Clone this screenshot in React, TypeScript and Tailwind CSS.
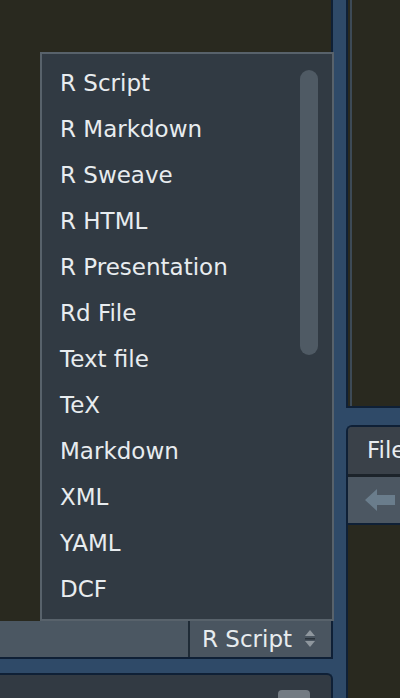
const fileTypes = [
  "R Script",
  "R Markdown",
  "R Sweave",
  "R HTML",
  "R Presentation",
  "Rd File",
  "Text file",
  "TeX",
  "Markdown",
  "XML",
  "YAML",
  "DCF",
];

const font = { fontFamily: '"DejaVu Sans", "Liberation Sans", sans-serif' };

function UpDown() {
  return (
    <svg width="12" height="20" viewBox="0 0 12 20" className="ml-auto">
      <path d="M6 1 L11 7 L1 7 Z" fill="#8f979e" />
      <rect x="1" y="9" width="10" height="1.5" fill="#2a333b" />
      <path d="M1 12 L11 12 L6 18 Z" fill="#8f979e" />
    </svg>
  );
}

export default function App() {
  return (
    <div
      className="relative flex h-[698px] w-[400px] overflow-hidden bg-[#2f4a68] text-[#e8ecef]"
      style={font}
    >
      {/* left column: source editor + status bar + console */}
      <div className="flex w-[333px] shrink-0 flex-col">
        <div className="h-[621px] shrink-0 border-r-2 border-[#0f2036] bg-[#29291f]" />
        <div className="flex h-[38px] shrink-0 justify-end border-r-2 border-b-2 border-[#0f2036] bg-[#4b5762]">
          <div className="flex w-[143px] items-center border-l-2 border-[#1f2b36] bg-[#4a5560] pl-[12px] pr-[15px] text-[23px]">
            <span>R Script</span>
            <UpDown />
          </div>
        </div>
        <div className="h-[14px] shrink-0" />
        <div className="flex min-h-0 flex-1 justify-end overflow-hidden rounded-tr-md border-t-2 border-r-2 border-[#0f2036] bg-[#323a43] pr-[21px] pt-[15px]">
          <div className="h-[20px] w-[32px] shrink-0 rounded-[4px] bg-[#737b83]" />
        </div>
      </div>

      {/* splitter */}
      <div className="w-[13px] shrink-0" />

      {/* right column */}
      <div className="flex min-w-0 flex-1 flex-col">
        <div className="h-[408px] shrink-0 border-l-2 border-b-2 border-[#0f2036] bg-[#29291f] pl-[2px]">
          <div className="h-full border-l-2 border-[#3d4a56] bg-[#29291f]" />
        </div>
        <div className="h-[17px] shrink-0" />
        <div className="flex min-h-0 flex-1 flex-col overflow-hidden rounded-tl-md border-t-2 border-l-2 border-[#0f2036]">
          <div className="flex h-[47px] shrink-0 items-center whitespace-nowrap bg-[#3a4149] pl-[19px] text-[23px]">
            File
          </div>
          <div className="h-[3px] shrink-0 bg-[#1c232a]" />
          <div className="flex h-[46px] shrink-0 items-center bg-[#4c5762] pl-[17px]">
            <svg width="30" height="24" viewBox="0 0 30 24" className="shrink-0">
              <path d="M0 12 L12 1 L12 7 L30 7 L30 17 L12 17 L12 23 Z" fill="#6a7d8c" />
            </svg>
          </div>
          <div className="flex-1 border-t-2 border-[#0f2036] bg-[#29291f]" />
        </div>
      </div>

      {/* new file type popup */}
      <div className="absolute left-[40px] top-[52px] h-[569px] w-[294px] border-2 border-[#58626b] bg-[#313a43] pt-[6px]">
        {fileTypes.map((type) => (
          <div key={type} className="flex h-[46px] items-center pl-[18px] text-[23px]">
            {type}
          </div>
        ))}
        <div className="absolute right-[14px] top-[16px] h-[285px] w-[18px] rounded-full bg-[#4f5a64]" />
      </div>
    </div>
  );
}
